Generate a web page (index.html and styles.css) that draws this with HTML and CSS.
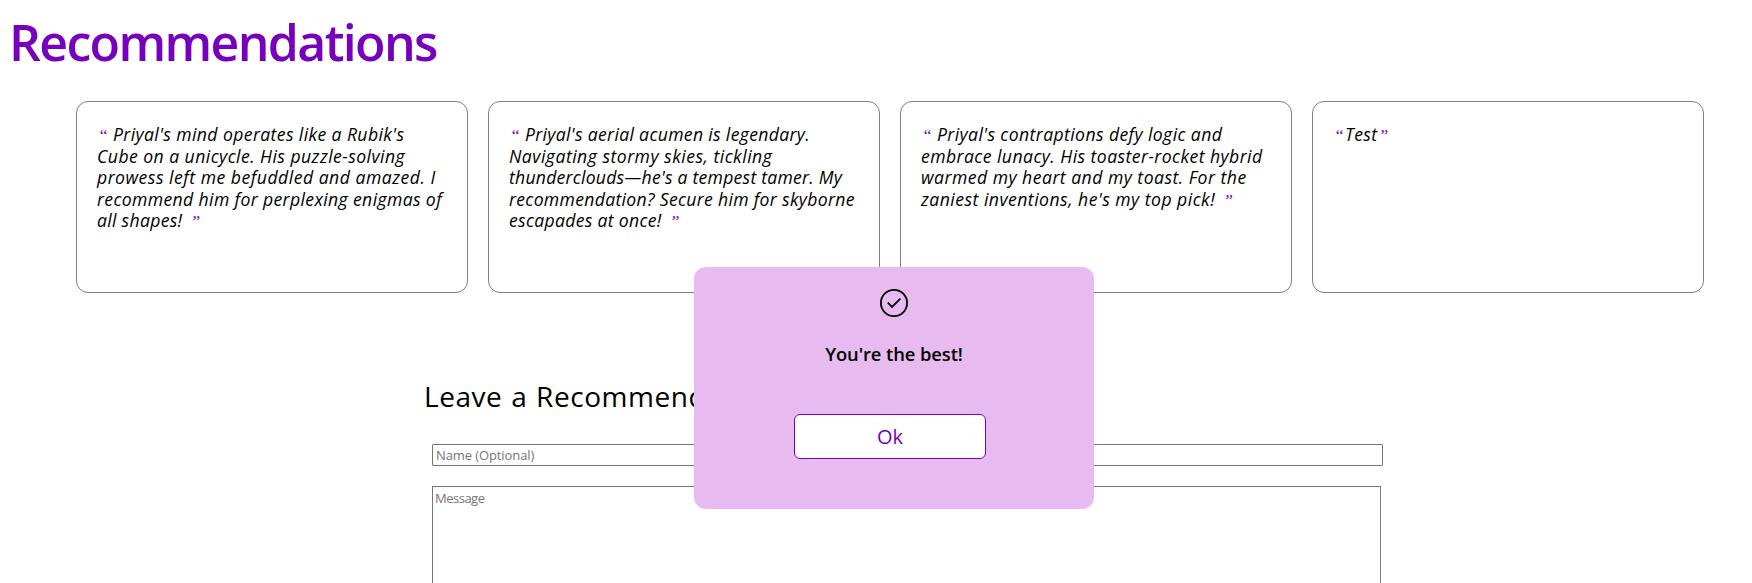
FILE: index.html
```html
<!DOCTYPE html>
<html lang="en">
<head>
<meta charset="utf-8">
<title>Recommendations</title>
<link rel="stylesheet" href="styles.css">
</head>
<body>
<h1 class="title"><span>Recommendations</span></h1>
<section class="cards">
  <blockquote class="card">
    <span class="line a1"><i class="open">“</i>Priyal's mind operates like a Rubik's</span>
    <span class="line a2">Cube on a unicycle. His puzzle-solving</span>
    <span class="line a3">prowess left me befuddled and amazed. I</span>
    <span class="line a4">recommend him for perplexing enigmas of</span>
    <span class="line a5">all shapes!<i class="close">”</i></span>
  </blockquote>
  <blockquote class="card">
    <span class="line b1"><i class="open">“</i>Priyal's aerial acumen is legendary.</span>
    <span class="line b2">Navigating stormy skies, tickling</span>
    <span class="line b3">thunderclouds—he's a tempest tamer. My</span>
    <span class="line b4">recommendation? Secure him for skyborne</span>
    <span class="line b5">escapades at once!<i class="close">”</i></span>
  </blockquote>
  <blockquote class="card">
    <span class="line c1"><i class="open">“</i>Priyal's contraptions defy logic and</span>
    <span class="line c2">embrace lunacy. His toaster-rocket hybrid</span>
    <span class="line c3">warmed my heart and my toast. For the</span>
    <span class="line c4">zaniest inventions, he's my top pick!<i class="close">”</i></span>
  </blockquote>
  <blockquote class="card">
    <span class="line d1"><i class="open tight">“</i>Test<i class="close tight">”</i></span>
  </blockquote>
</section>
<form class="form">
  <h2 class="form-title">Leave a Recommendation</h2>
  <input class="name" type="text" placeholder="Name (Optional)">
  <textarea class="message" placeholder="Message"></textarea>
</form>
<div class="popup">
  <svg class="check" width="30" height="30" viewBox="0 0 30 30" fill="none" stroke="#000">
    <circle cx="15" cy="15" r="13.1" stroke-width="1.8"/>
    <path d="M8.8 14.7l4.2 4.2 8.4-8.2" stroke-width="1.8"/>
  </svg>
  <p class="thanks">You're the best!</p>
  <button class="ok" type="button">Ok</button>
</div>
</body>
</html>
```
FILE: styles.css
```css
* { box-sizing: border-box; }
body {
  margin: 0;
  height: 583px;
  overflow: hidden;
  background: #fff;
  color: #000;
  font-family: "Trebuchet MS", "Open Sans", sans-serif;
}
.title {
  margin: 0;
  padding: 8px 0 0 9px;
  height: 101px;
  font-size: 50px;
  line-height: 68px;
  font-weight: 600;
  letter-spacing: -1.65px;
  color: #7600bc;
}
.cards {
  display: flex;
  gap: 20px;
  padding-left: 76px;
}
.card {
  flex: none;
  width: 392px;
  height: 192px;
  margin: 0;
  padding: 21.5px 0 0 20px;
  border: 1px solid #808080;
  border-radius: 12px;
  font-style: italic;
  font-size: 17.6px;
  line-height: 21.4px;
}
.line { display: block; white-space: nowrap; }
.a1 { letter-spacing: .39px; }
.a2 { letter-spacing: .45px; }
.a3 { letter-spacing: .5px; }
.a4 { letter-spacing: .37px; }
.a5 { letter-spacing: .3px; }
.b1 { letter-spacing: .33px; }
.b2 { letter-spacing: .49px; }
.b3 { letter-spacing: .24px; }
.b4 { letter-spacing: .32px; }
.b5 { letter-spacing: .31px; }
.c1 { letter-spacing: .4px; }
.c2 { letter-spacing: .44px; }
.c3 { letter-spacing: .48px; }
.c4 { letter-spacing: .48px; }
.d1 { letter-spacing: .4px; }
.open, .close {
  display: inline-block;
  font-family: "Liberation Serif", serif;
  color: #7600bc;
  letter-spacing: 0;
}
.open { width: 16px; padding-left: 1px; }
.close { padding-left: 8px; }
.open.tight { width: 12px; padding-left: 1px; }
.close.tight { padding-left: 1px; }
.form {
  display: flex;
  flex-direction: column;
  padding: 84px 0 0 424px;
}
.form-title {
  margin: 0 0 47px;
  height: 20px;
  line-height: 39px;
  font-weight: 400;
  font-size: 28px;
  letter-spacing: .55px;
  word-spacing: 1px;
}
.name, .message {
  display: block;
  margin: 0 0 20px 8px;
  border: 1px solid #767676;
  border-radius: 1px;
  font: 13px "Trebuchet MS", "Open Sans", sans-serif;
}
.name { width: 951px; height: 22px; padding: 1px 3px; letter-spacing: -.1px; }
.message {
  width: 949px;
  height: 97px;
  margin-bottom: 0;
  padding: 2px;
  border-bottom: 0;
  border-radius: 1px 1px 0 0;
  resize: none;
  letter-spacing: -.5px;
}
.name::placeholder, .message::placeholder { color: #757575; }
.popup {
  position: absolute;
  left: 694px;
  top: 267px;
  width: 400px;
  height: 242px;
  padding-top: 21px;
  display: flex;
  flex-direction: column;
  align-items: center;
  border-radius: 12px;
  background: #e8bbf0;
}
.thanks {
  margin: 22px 0 47px;
  line-height: 27px;
  font-size: 18.4px;
  font-weight: 600;
  letter-spacing: -.1px;
}
.ok {
  width: 192px;
  height: 45px;
  margin-right: 8px;
  padding: 0;
  border: 1px solid #7600bc;
  border-radius: 6px;
  background: #fff;
  color: #7600bc;
  font: 20px/40px "Trebuchet MS", "Open Sans", sans-serif;
}
```
